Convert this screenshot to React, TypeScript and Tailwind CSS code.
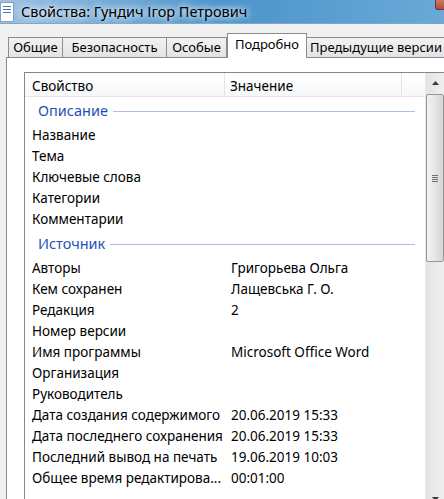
import React from 'react';

type Row = { name: string; value?: string };

const description: Row[] = [
  { name: 'Название' },
  { name: 'Тема' },
  { name: 'Ключевые слова' },
  { name: 'Категории' },
  { name: 'Комментарии' },
];

const source: Row[] = [
  { name: 'Авторы', value: 'Григорьева Ольга' },
  { name: 'Кем сохранен', value: 'Лащевська Г. О.' },
  { name: 'Редакция', value: '2' },
  { name: 'Номер версии' },
  { name: 'Имя программы', value: 'Microsoft Office Word' },
  { name: 'Организация' },
  { name: 'Руководитель' },
  { name: 'Дата создания содержимого', value: '20.06.2019 15:33' },
  { name: 'Дата последнего сохранения', value: '20.06.2019 15:33' },
  { name: 'Последний вывод на печать', value: '19.06.2019 10:03' },
  { name: 'Общее время редактирова...', value: '00:01:00' },
];

const tabs = ['Общие', 'Безопасность', 'Особые', 'Подробно', 'Предыдущие версии'];
const tabWidths = ['w-[55px]', 'w-[105px]', 'w-[61px]', 'w-[80px]', 'w-[140px]'];

const GroupHeader = ({ title }: { title: string }) => (
  <div className="h-[28px] flex items-center pl-[13px] pr-[10px] gap-[5px]">
    <span className="text-[14.5px] text-[#1e50b4]">{title}</span>
    <div className="flex-1 h-px bg-[#a9bde6]" />
  </div>
);

const PropRow = ({ row }: { row: Row }) => (
  <div className="h-[21px] flex items-center whitespace-nowrap">
    <div className="w-[199px] pl-[7px] overflow-hidden">{row.name}</div>
    <div className="pl-[7px]">{row.value ?? ''}</div>
  </div>
);

const Scrollbar = () => (
  <div className="w-[19px] h-[437px] flex flex-col bg-gradient-to-r from-[#e3e3e3] to-[#f0f0f0] border-l border-[#e8e8e8]">
    <div className="h-[20px] flex items-center justify-center">
      <svg width="7" height="4" viewBox="0 0 7 4"><path d="M3.5 0 L7 4 L0 4 Z" fill="#3a3a3a" /></svg>
    </div>
    <div className="mt-px h-[168px] border border-[#979797] rounded-[2px] bg-gradient-to-r from-[#f2f2f2] via-[#e6e6e6] to-[#d4d4d4] flex items-center justify-center">
      <div className="flex flex-col gap-[1px]">
        <div className="w-[6px] h-px bg-[#6d6d6d]" />
        <div className="w-[6px] h-px bg-[#6d6d6d]" />
        <div className="w-[6px] h-px bg-[#6d6d6d]" />
        <div className="w-[6px] h-px bg-[#6d6d6d]" />
      </div>
    </div>
    <div className="flex-1" />
    <div className="h-[20px] flex items-start justify-center pt-[7px]">
      <svg width="7" height="4" viewBox="0 0 7 4"><path d="M0 0 L7 0 L3.5 4 Z" fill="#3a3a3a" /></svg>
    </div>
  </div>
);

export default function App() {
  return (
    <div className="w-[444px] h-[499px] overflow-hidden bg-[#f0f0f0] flex flex-col text-black text-[13.5px] font-['Noto_Sans',sans-serif]">
      {/* title bar */}
      <div className="h-[24px] shrink-0 flex items-start bg-gradient-to-r from-[#9cc2e3] via-[#4a95cb] to-[#6aa9d7] border-b border-[#7fa6c8]">
        <div className="w-[14px] h-[20px] mt-[2px] bg-white border border-[#8aa0b8] flex flex-col gap-[2px] pt-[3px] pl-[2px]">
          <div className="w-[8px] h-px bg-[#4a78c0]" />
          <div className="w-[8px] h-px bg-[#4a78c0]" />
          <div className="w-[8px] h-px bg-[#4a78c0]" />
        </div>
        <div className="ml-[7px] mt-[1px] text-[14.5px] leading-[20px] [text-shadow:0_0_6px_#ffffff,0_0_10px_#ffffff]">
          Свойства: Гундич Ігор Петрович
        </div>
        <div className="flex-1" />
        <div className="w-[9px] h-[10px] rounded-bl-[3px] bg-gradient-to-b from-[#c77a6a] to-[#b24a36] border-l border-b border-[#6b3a33]" />
      </div>

      {/* tabs */}
      <div className="mt-[9px] h-[24px] shrink-0 flex items-end pl-[8px] text-[13px]">
        {tabs.map((t, i) => {
          const active = t === 'Подробно';
          return (
            <div
              key={t}
              className={`${tabWidths[i]} shrink-0 flex items-center justify-center whitespace-nowrap border border-b-0 border-[#898c95] ${
                active
                  ? 'h-[25px] -mb-px bg-white relative z-10 pb-[3px]'
                  : 'h-[20px] bg-gradient-to-b from-[#f2f2f2] to-[#e3e3e3] -ml-px first:ml-0'
              }`}
            >
              {t}
            </div>
          );
        })}
      </div>

      {/* panel */}
      <div className="flex-1 ml-[6px] border-l border-t border-[#898c95] bg-white pl-[17px] pt-[14px] flex flex-col">
        <div className="flex-1 border-l border-t border-[#828790] flex">
          <div className="w-[400px] flex flex-col">
            <div className="h-[24px] flex border-b border-[#e5e5e5] bg-gradient-to-b from-white to-[#f6f7f8]">
              <div className="w-[200px] pl-[7px] pt-[3px] flex items-center border-r border-[#e5e5e5]">Свойство</div>
              <div className="w-[177px] pl-[5px] pt-[3px] flex items-center border-r border-[#e5e5e5]">Значение</div>
              <div className="flex-1" />
            </div>
            <GroupHeader title="Описание" />
            {description.map((r) => (
              <PropRow key={r.name} row={r} />
            ))}
            <GroupHeader title="Источник" />
            {source.map((r) => (
              <PropRow key={r.name} row={r} />
            ))}
          </div>
          <Scrollbar />
        </div>
      </div>
    </div>
  );
}
